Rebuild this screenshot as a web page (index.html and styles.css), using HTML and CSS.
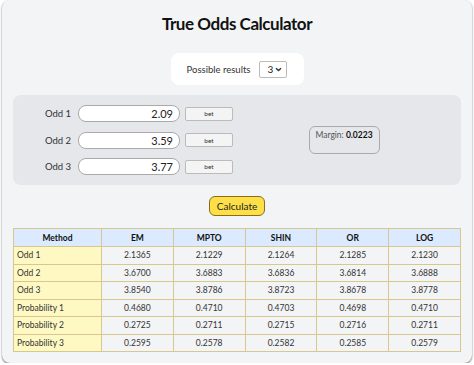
FILE: index.html
```html
<!DOCTYPE html>
<html lang="en">

<head>
    <meta charset="UTF-8">
    <meta name="viewport" content="width=device-width, initial-scale=1.0">
    <title>True Odds Calculator</title>
    <link rel="stylesheet" href="styles.css">
</head>

<body>
    <div class="app">
        <h1>True Odds Calculator</h1>

        <div class="settings">
            <span>Possible results</span>
            <span class="select-box">
                3
                <svg width="7" height="5" viewBox="0 0 7 5"><path d="M1 1.2 L3.5 3.6 L6 1.2" fill="none" stroke="#333" stroke-width="1.4"/></svg>
            </span>
        </div>

        <div class="odds-panel">
            <div class="odds-list">
                <div class="odd-row">
                    <span class="odd-label">Odd 1</span>
                    <input class="odd-input" type="text" value="2.09">
                    <button class="bet-btn">bet</button>
                </div>
                <div class="odd-row">
                    <span class="odd-label">Odd 2</span>
                    <input class="odd-input" type="text" value="3.59">
                    <button class="bet-btn">bet</button>
                </div>
                <div class="odd-row">
                    <span class="odd-label">Odd 3</span>
                    <input class="odd-input" type="text" value="3.77">
                    <button class="bet-btn">bet</button>
                </div>
            </div>
            <div class="margin-area">
                <div class="margin-box">Margin: <b>0.0223</b></div>
            </div>
        </div>

        <div class="actions">
            <button class="calc-btn">Calculate</button>
        </div>

        <table class="results">
            <thead>
                <tr>
                    <th>Method</th>
                    <th>EM</th>
                    <th>MPTO</th>
                    <th>SHIN</th>
                    <th>OR</th>
                    <th>LOG</th>
                </tr>
            </thead>
            <tbody>
                <tr><td>Odd 1</td><td>2.1365</td><td>2.1229</td><td>2.1264</td><td>2.1285</td><td>2.1230</td></tr>
                <tr><td>Odd 2</td><td>3.6700</td><td>3.6883</td><td>3.6836</td><td>3.6814</td><td>3.6888</td></tr>
                <tr><td>Odd 3</td><td>3.8540</td><td>3.8786</td><td>3.8723</td><td>3.8678</td><td>3.8778</td></tr>
                <tr><td>Probability 1</td><td>0.4680</td><td>0.4710</td><td>0.4703</td><td>0.4698</td><td>0.4710</td></tr>
                <tr><td>Probability 2</td><td>0.2725</td><td>0.2711</td><td>0.2715</td><td>0.2716</td><td>0.2711</td></tr>
                <tr><td>Probability 3</td><td>0.2595</td><td>0.2578</td><td>0.2582</td><td>0.2585</td><td>0.2579</td></tr>
            </tbody>
        </table>
    </div>
</body>

</html>
```

FILE: styles.css
```css
body {
    margin: 0;
    padding: 0 2px;
    background: #ffffff;
    font-family: Lato, "Noto Sans", sans-serif;
    color: #222;
}

.app {
    background: #f3f4f6;
    padding: 4px 11px 11px;
    border-radius: 8px;
    box-shadow: 0 1px 2px rgba(0, 0, 0, 0.6);
}

h1 {
    margin: 6px 0 0;
    font-size: 17px;
    letter-spacing: -0.45px;
    font-weight: 700;
    text-align: center;
    color: #111;
    line-height: 28px;
}

.settings {
    width: 133px;
    height: 32px;
    margin: 15px auto 0;
    background: #fff;
    border-radius: 8px;
    display: flex;
    align-items: center;
    justify-content: center;
    gap: 9px;
    font-size: 9.5px;
    color: #333;
}

.select-box {
    box-sizing: border-box;
    display: flex;
    align-items: center;
    justify-content: space-between;
    width: 28px;
    height: 17px;
    padding: 0 4px 0 7px;
    border: 1px solid #bbb;
    border-radius: 2px;
    background: #fff;
    font-size: 10px;
    color: #222;
}

.odds-panel {
    margin-top: 10px;
    background: #e5e7eb;
    border-radius: 8px;
    padding: 10px 0;
    display: flex;
}

.odds-list {
    display: flex;
    flex-direction: column;
    gap: 9.5px;
    padding-left: 25px;
}

.odd-row {
    display: flex;
    align-items: center;
    height: 17px;
}

.odd-label {
    width: 33px;
    text-align: right;
    font-size: 9.5px;
    color: #333;
    margin-right: 7px;
}

.odd-input {
    box-sizing: border-box;
    width: 102px;
    height: 17px;
    border: 1px solid #aaa;
    border-radius: 8px;
    background: #fff;
    text-align: right;
    padding: 0 6px;
    font-family: inherit;
    font-size: 11px;
    color: #222;
}

.bet-btn {
    box-sizing: border-box;
    width: 48px;
    height: 14px;
    margin-left: 5px;
    padding: 0;
    border: 1px solid #bbb;
    border-radius: 2px;
    background: #f4f4f4;
    font-family: inherit;
    font-size: 6.5px;
    color: #333;
}

.margin-area {
    flex: 1;
    display: flex;
    align-items: center;
    justify-content: center;
    padding-right: 6px;
}

.margin-box {
    box-sizing: border-box;
    width: 71px;
    height: 28px;
    padding-top: 3px;
    border: 1px solid #aaa;
    border-radius: 6px;
    text-align: center;
    font-size: 8.5px;
    color: #555;
}

.margin-box b {
    color: #111;
}

.actions {
    display: flex;
    justify-content: center;
    margin-top: 11px;
}

.calc-btn {
    box-sizing: border-box;
    width: 56px;
    height: 20px;
    padding: 0;
    background: #fde047;
    border: 1px solid #8a6d1a;
    border-radius: 6px;
    font-family: inherit;
    font-size: 10px;
    color: #222;
}

.results {
    width: 100%;
    margin-top: 12px;
    border-collapse: collapse;
    font-size: 8.5px;
    color: #333;
}

.results th,
.results td {
    border: 1px solid #d8c88f;
    height: 16.5px;
    padding: 0;
    text-align: center;
}

.results th {
    background: #dbeafe;
    font-weight: 700;
    color: #111;
    height: 17px;
}

.results th:first-child {
    width: 87px;
}

.results td:first-child {
    background: #fef9c3;
    text-align: left;
    padding-left: 3px;
}
```
